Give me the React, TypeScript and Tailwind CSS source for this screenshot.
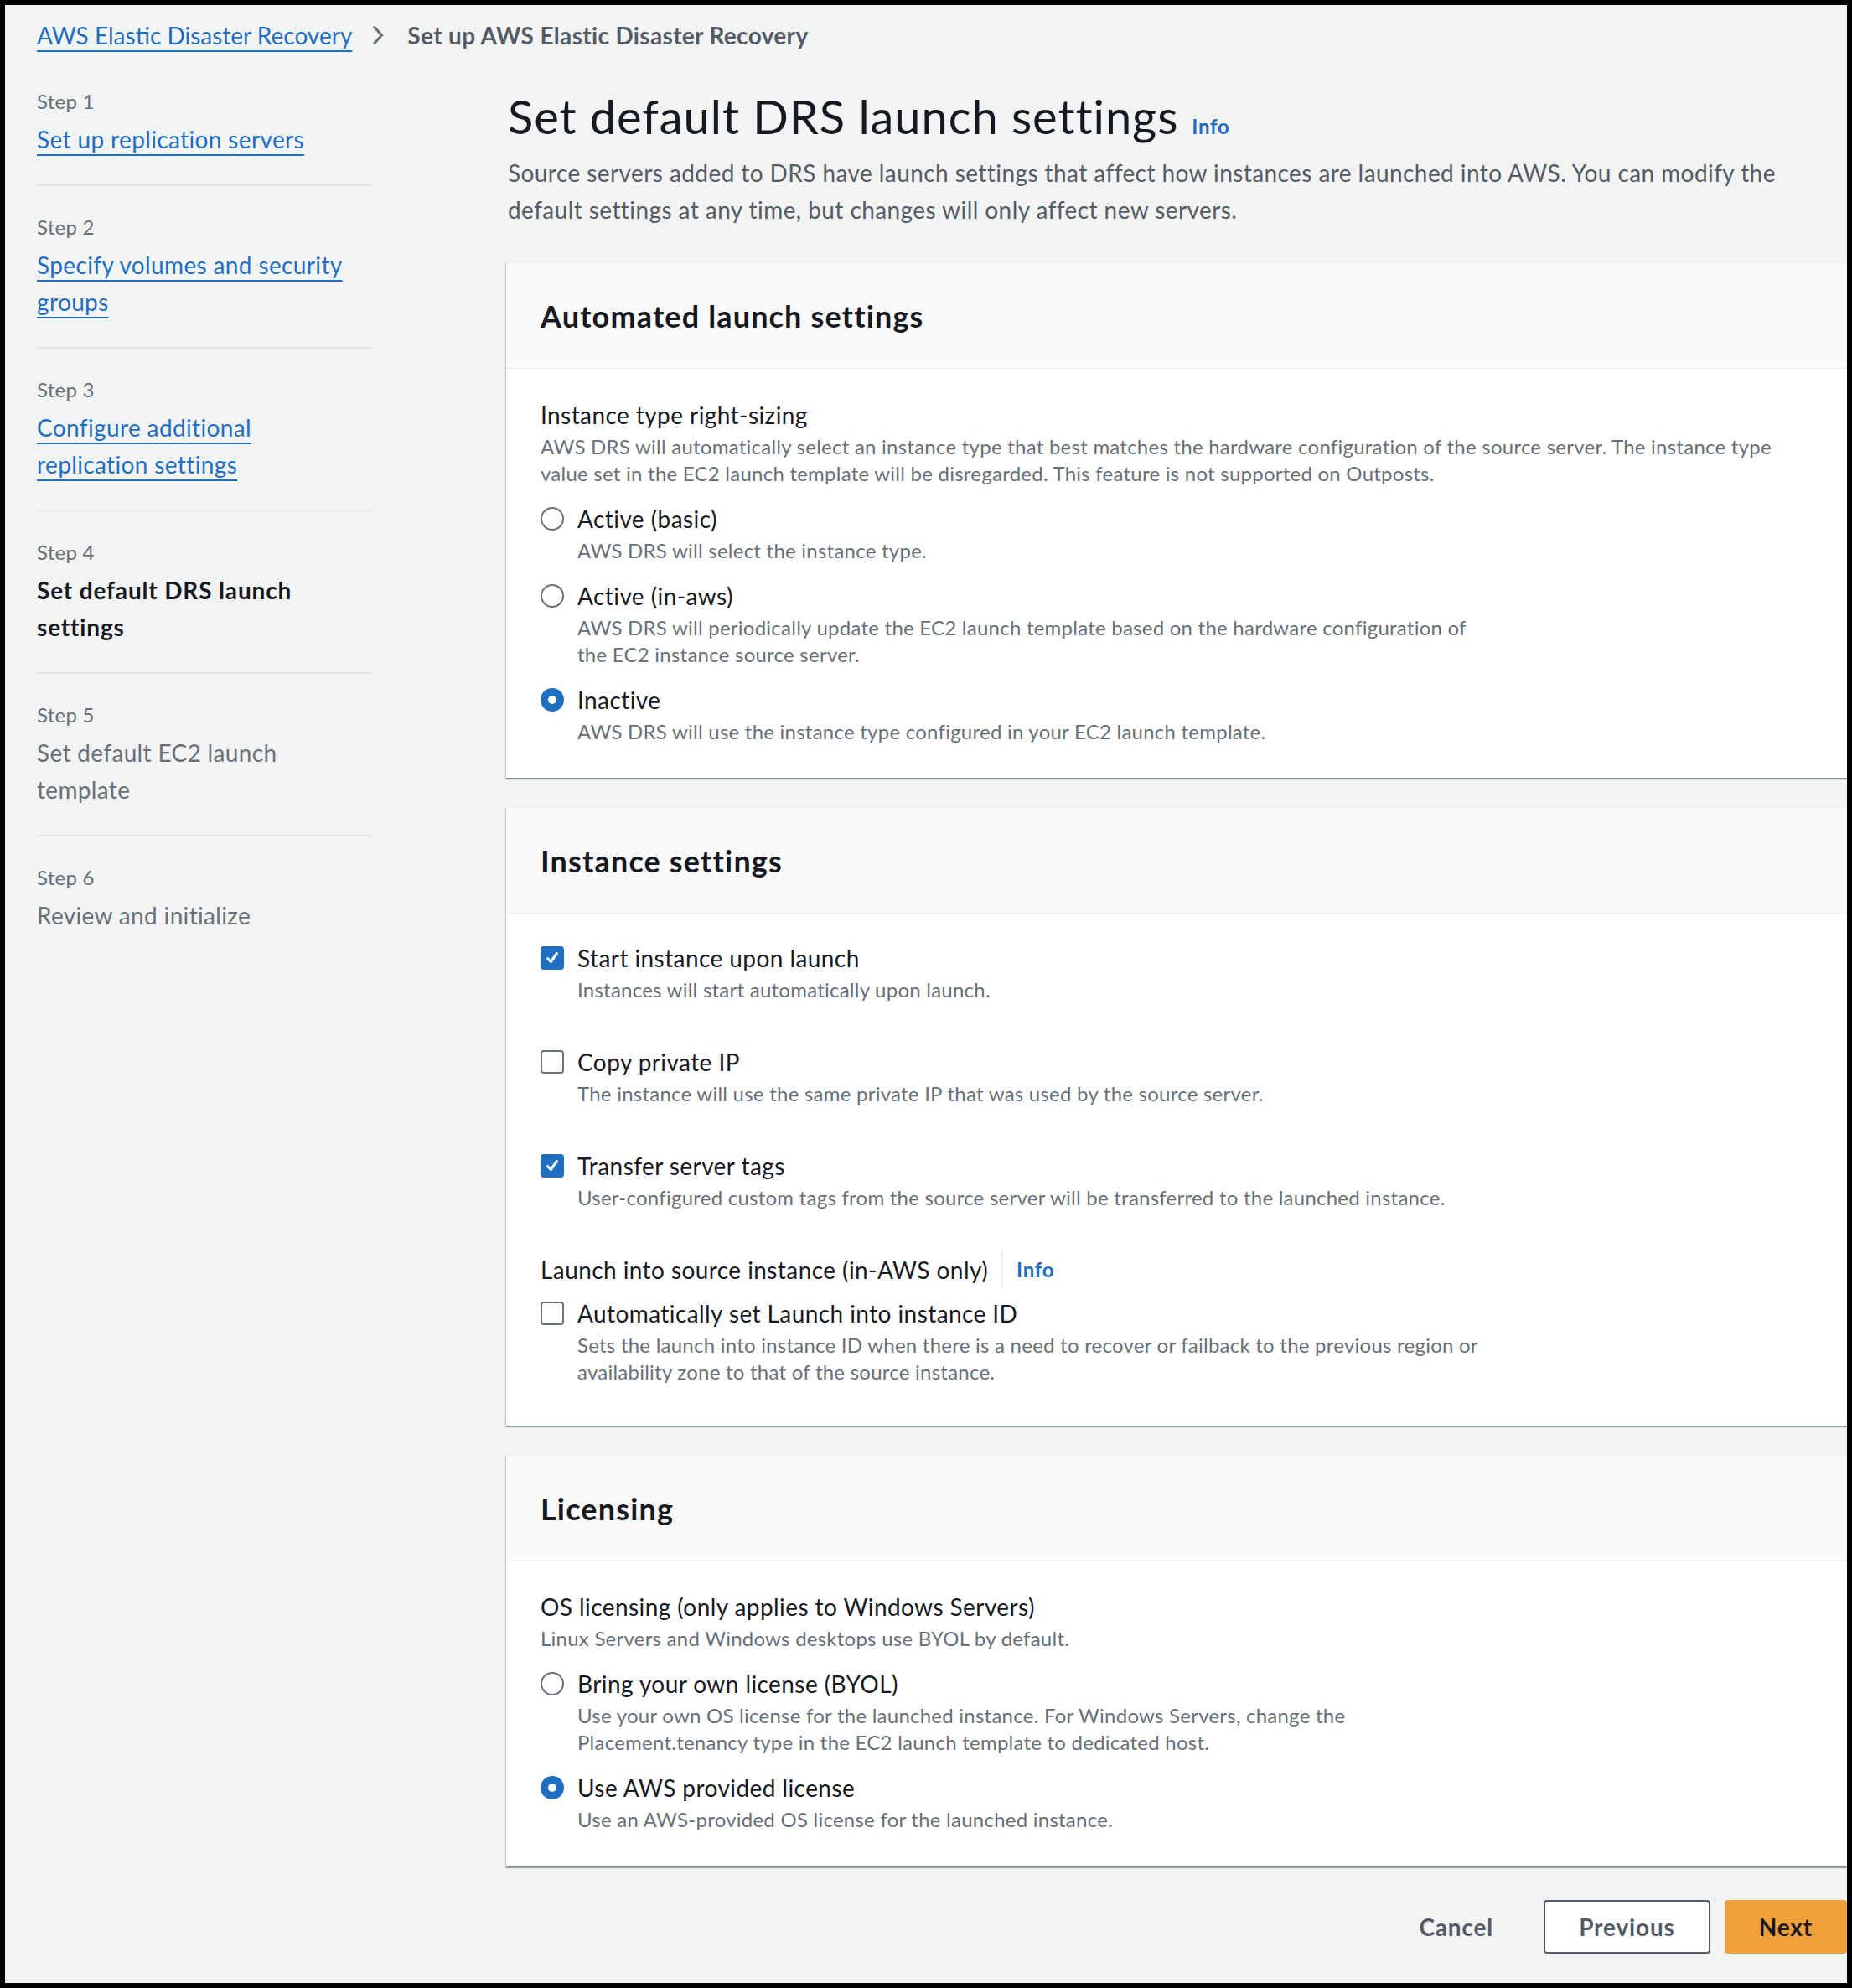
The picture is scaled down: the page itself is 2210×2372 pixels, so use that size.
import React from 'react'

type Step = { n: number; lines: string[]; kind: 'link' | 'current' | 'disabled' }

const steps: Step[] = [
  { n: 1, lines: ['Set up replication servers'], kind: 'link' },
  { n: 2, lines: ['Specify volumes and security', 'groups'], kind: 'link' },
  { n: 3, lines: ['Configure additional', 'replication settings'], kind: 'link' },
  { n: 4, lines: ['Set default DRS launch', 'settings'], kind: 'current' },
  { n: 5, lines: ['Set default EC2 launch', 'template'], kind: 'disabled' },
  { n: 6, lines: ['Review and initialize'], kind: 'disabled' },
]

const linkCls = 'text-[#1f6ebf] underline decoration-2 underline-offset-[7px]'
const smallCls = 'text-[24px] leading-[32px] tracking-[0.01em] text-[#687078]'

function Radio({ checked }: { checked?: boolean }) {
  if (checked) {
    return (
      <span className="flex h-[28px] w-[28px] shrink-0 items-center justify-center rounded-full bg-[#1f6ebf]">
        <span className="h-[10px] w-[10px] rounded-full bg-white" />
      </span>
    )
  }
  return <span className="h-[28px] w-[28px] shrink-0 rounded-full border-2 border-[#687078] bg-white" />
}

function Check({ checked }: { checked?: boolean }) {
  if (checked) {
    return (
      <span className="flex h-[28px] w-[28px] shrink-0 items-center justify-center rounded-[4px] bg-[#1f6ebf]">
        <svg width="20" height="20" viewBox="0 0 20 20" fill="none">
          <path d="M4.5 10.5L8.3 14.5L15.5 4.5" stroke="white" strokeWidth="3" strokeLinecap="round" strokeLinejoin="round" />
        </svg>
      </span>
    )
  }
  return <span className="h-[28px] w-[28px] shrink-0 rounded-[4px] border-2 border-[#687078] bg-white" />
}

function Option({ control, label, desc }: { control: React.ReactNode; label: string; desc: string[] }) {
  return (
    <div>
      <div className="flex h-[44px] items-center gap-[16px]">
        {control}
        <span className="text-[#16191f]">{label}</span>
      </div>
      <div className={'pl-[44px] ' + smallCls}>
        {desc.map((l) => (
          <div key={l} className="whitespace-nowrap">{l}</div>
        ))}
      </div>
    </div>
  )
}

function Panel({ title, children, body }: { title: string; children: React.ReactNode; body: string }) {
  return (
    <section className="border-t border-[#eaeded] bg-white shadow-[0_2px_1px_0_rgba(0,28,36,0.35),-1px_1px_1px_0_rgba(0,28,36,0.15)]">
      <div className="flex h-[126px] items-center border-b border-[#eaeded] bg-[#fafafa] pl-[41px]">
        <h2 className="text-[36px] font-bold leading-[44px] tracking-[0.032em] text-[#16191f]">{title}</h2>
      </div>
      <div className={body}>{children}</div>
    </section>
  )
}

export default function App() {
  return (
    <div className="h-[2372px] w-[2210px] bg-black p-[6px] font-['Lato',sans-serif] text-[28px] leading-[44px] tracking-[0.015em]">
      <div className="h-full w-full overflow-hidden bg-[#f2f3f3]">
        {/* breadcrumbs */}
        <div className="mt-[14px] flex h-[44px] items-center pl-[38px]">
          <a className={linkCls + ' tracking-normal'}>AWS Elastic Disaster Recovery</a>
          <svg className="ml-[24px] mr-[28px]" width="14" height="24" viewBox="0 0 14 24" fill="none">
            <path d="M2 1.5L11.5 12L2 22.5" stroke="#687078" strokeWidth="3" />
          </svg>
          <span className="font-bold tracking-[0.012em] text-[#545b64]">Set up AWS Elastic Disaster Recovery</span>
        </div>

        <div className="flex">
          {/* wizard steps */}
          <nav className="ml-[38px] mt-[8px] w-[400px] shrink-0">
            {steps.map((s, i) => (
              <div
                key={s.n}
                className={'pt-[33px] pb-[32px] ' + (i < steps.length - 1 ? 'border-b-2 border-[#dfe1e3]' : '')}
              >
                <div className={smallCls}>Step {s.n}</div>
                <div className="mt-[7px]">
                  {s.kind === 'link' ? (
                    <a className={linkCls + ' tracking-[0.013em]'}>
                      {s.lines.map((l, j) => (
                        <React.Fragment key={l}>
                          {j > 0 && <br />}
                          {l}
                        </React.Fragment>
                      ))}
                    </a>
                  ) : (
                    s.lines.map((l) => (
                      <div
                        key={l}
                        className={
                          s.kind === 'current'
                            ? 'font-bold tracking-[0.03em] text-[#16191f]'
                            : 'tracking-[0.012em] text-[#687078]'
                        }
                      >
                        {l}
                      </div>
                    ))
                  )}
                </div>
              </div>
            ))}
          </nav>

          {/* main form */}
          <main className="ml-[160px] flex-1 pt-[39px]">
            <div className="ml-[2px] flex items-baseline">
              <h1 className="text-[56px] leading-[72px] tracking-[0.017em] text-[#16191f]">Set default DRS launch settings</h1>
              <a className="ml-[16px] text-[24px] font-bold tracking-[0.03em] text-[#1f6ebf]">Info</a>
            </div>
            <div className="ml-[2px] mt-[9px] text-[#545b64]">
              <div className="whitespace-nowrap">
                Source servers added to DRS have launch settings that affect how instances are launched into AWS. You can modify the
              </div>
              <div className="whitespace-nowrap">
                default settings at any time, but changes will only affect new servers.
              </div>
            </div>

            <div className="mt-[41px]">
              <Panel title="Automated launch settings" body="pl-[41px] pt-[33px] pb-[39px]">
                <div className="text-[#16191f]">Instance type right-sizing</div>
                <div className={smallCls}>
                  <div className="whitespace-nowrap">
                    AWS DRS will automatically select an instance type that best matches the hardware configuration of the source server. The instance type
                  </div>
                  <div className="whitespace-nowrap">
                    value set in the EC2 launch template will be disregarded. This feature is not supported on Outposts.
                  </div>
                </div>
                <div className="mt-[16px] flex flex-col gap-[16px]">
                  <Option control={<Radio />} label="Active (basic)" desc={['AWS DRS will select the instance type.']} />
                  <Option
                    control={<Radio />}
                    label="Active (in-aws)"
                    desc={[
                      'AWS DRS will periodically update the EC2 launch template based on the hardware configuration of',
                      'the EC2 instance source server.',
                    ]}
                  />
                  <Option
                    control={<Radio checked />}
                    label="Inactive"
                    desc={['AWS DRS will use the instance type configured in your EC2 launch template.']}
                  />
                </div>
              </Panel>
            </div>

            <div className="mt-[35px]">
              <Panel title="Instance settings" body="pl-[41px] pt-[31px] pb-[48px] flex flex-col gap-[48px]">
                <Option control={<Check checked />} label="Start instance upon launch" desc={['Instances will start automatically upon launch.']} />
                <Option
                  control={<Check />}
                  label="Copy private IP"
                  desc={['The instance will use the same private IP that was used by the source server.']}
                />
                <Option
                  control={<Check checked />}
                  label="Transfer server tags"
                  desc={['User-configured custom tags from the source server will be transferred to the launched instance.']}
                />
                <div>
                  <div className="flex items-center">
                    <span className="text-[#16191f]">Launch into source instance (in-AWS only)</span>
                    <a className="ml-[16px] border-l-2 border-[#eaeded] pl-[16px] text-[24px] font-bold leading-[44px] tracking-[0.03em] text-[#1f6ebf]">
                      Info
                    </a>
                  </div>
                  <div className="mt-[8px]">
                    <Option
                      control={<Check />}
                      label="Automatically set Launch into instance ID"
                      desc={[
                        'Sets the launch into instance ID when there is a need to recover or failback to the previous region or',
                        'availability zone to that of the source instance.',
                      ]}
                    />
                  </div>
                </div>
              </Panel>
            </div>

            <div className="mt-[35px]">
              <Panel title="Licensing" body="pl-[41px] pt-[32px] pb-[40px]">
                <div className="text-[#16191f]">OS licensing (only applies to Windows Servers)</div>
                <div className={smallCls}>Linux Servers and Windows desktops use BYOL by default.</div>
                <div className="mt-[16px] flex flex-col gap-[16px]">
                  <Option
                    control={<Radio />}
                    label="Bring your own license (BYOL)"
                    desc={[
                      'Use your own OS license for the launched instance. For Windows Servers, change the',
                      'Placement.tenancy type in the EC2 launch template to dedicated host.',
                    ]}
                  />
                  <Option
                    control={<Radio checked />}
                    label="Use AWS provided license"
                    desc={['Use an AWS-provided OS license for the launched instance.']}
                  />
                </div>
              </Panel>
            </div>

            <div className="mt-[40px] flex items-center justify-end tracking-[0.03em]">
              <button className="h-[64px] px-[40px] font-bold text-[#545b64]">Cancel</button>
              <button className="ml-[20px] h-[64px] rounded-[4px] border-2 border-[#545b64] bg-white px-[40px] font-bold text-[#545b64]">
                Previous
              </button>
              <button className="ml-[17px] h-[64px] rounded-[4px] bg-[#f0a03a] px-[41px] font-bold text-[#16191f]">
                Next
              </button>
            </div>
          </main>
        </div>
      </div>
    </div>
  )
}
